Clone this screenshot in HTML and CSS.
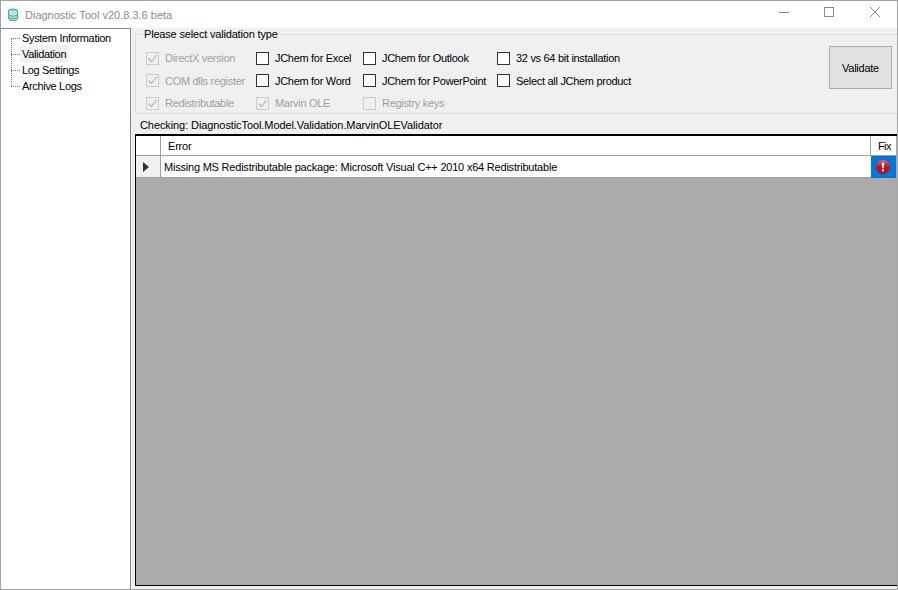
FILE: index.html
```html
<!DOCTYPE html>
<html lang="en">
<head>
<meta charset="utf-8">
<title>Diagnostic Tool</title>
<link rel="stylesheet" href="styles.css">
</head>
<body>
<div class="window">
  <header class="titlebar">
    <svg class="app-icon" width="12" height="14" viewBox="0 0 12 14">
      <ellipse cx="6" cy="3" rx="4.6" ry="2" fill="#8fd0cb" stroke="#3f9f9a"/>
      <path d="M1.4 3v7.500c0 1.200 2 2.200 4.600 2.200s4.600-1 4.600-2.200V3" fill="#bfe5e2" stroke="#3f9f9a"/>
      <path d="M1.400 6c0 1.200 2 2.200 4.600 2.200s4.600-1 4.600-2.200M1.400 8.500c0 1.200 2 2.200 4.600 2.200s4.600-1 4.600-2.200" fill="none" stroke="#3f9f9a"/>
    </svg>
    <span class="title">Diagnostic Tool v20.8.3.6 beta</span>
    <div class="controls">
      <svg class="ctl" width="45" height="27" viewBox="0 0 45 27"><path d="M17 11.500h10" stroke="#8a8a8a"/></svg>
      <svg class="ctl" width="45" height="27" viewBox="0 0 45 27"><rect x="17.500" y="6.500" width="9" height="9" fill="none" stroke="#8a8a8a"/></svg>
      <svg class="ctl" width="45" height="27" viewBox="0 0 45 27"><path d="M18 6l10 10M28 6L18 16" stroke="#8a8a8a" fill="none"/></svg>
    </div>
  </header>
  <div class="body">
    <nav class="tree">
      <ul class="tree-list">
        <li class="tree-item"><span class="tree-label">System Information</span></li>
        <li class="tree-item"><span class="tree-label selected">Validation</span></li>
        <li class="tree-item"><span class="tree-label">Log Settings</span></li>
        <li class="tree-item last"><span class="tree-label">Archive Logs</span></li>
      </ul>
    </nav>
    <main class="content">
      <section class="top">
        <fieldset class="group">
          <legend class="legend">Please select validation type</legend>
          <div class="options">
            <div class="opt off"><span class="box checked"><svg width="11" height="11" viewBox="0 0 11 11"><path d="M1.500 5.500l3 3 5-6.500" fill="none" stroke="#b5b5b5" stroke-width="1.200"/></svg></span><span>DirectX version</span></div>
            <div class="opt"><span class="box"></span><span>JChem for Excel</span></div>
            <div class="opt"><span class="box"></span><span>JChem for Outlook</span></div>
            <div class="opt"><span class="box"></span><span>32 vs 64 bit installation</span></div>
            <div class="opt off"><span class="box checked"><svg width="11" height="11" viewBox="0 0 11 11"><path d="M1.500 5.500l3 3 5-6.500" fill="none" stroke="#b5b5b5" stroke-width="1.200"/></svg></span><span>COM dlls register</span></div>
            <div class="opt"><span class="box"></span><span>JChem for Word</span></div>
            <div class="opt"><span class="box"></span><span>JChem for PowerPoint</span></div>
            <div class="opt"><span class="box"></span><span>Select all JChem product</span></div>
            <div class="opt off"><span class="box checked"><svg width="11" height="11" viewBox="0 0 11 11"><path d="M1.500 5.500l3 3 5-6.500" fill="none" stroke="#b5b5b5" stroke-width="1.200"/></svg></span><span>Redistributable</span></div>
            <div class="opt off"><span class="box checked"><svg width="11" height="11" viewBox="0 0 11 11"><path d="M1.500 5.500l3 3 5-6.500" fill="none" stroke="#b5b5b5" stroke-width="1.200"/></svg></span><span>Marvin OLE</span></div>
            <div class="opt off"><span class="box checked"></span><span>Registry keys</span></div>
          </div>
        </fieldset>
        <button class="validate" type="button">Validate</button>
      </section>
      <div class="status">Checking: DiagnosticTool.Model.Validation.MarvinOLEValidator</div>
      <section class="grid">
        <div class="grid-table">
          <div class="cell head corner"></div>
          <div class="cell head">Error</div>
          <div class="cell head fix">Fix</div>
          <div class="cell rowhead"><svg width="7" height="10" viewBox="0 0 7 10"><path d="M0 0l6 5-6 5z" fill="#333"/></svg></div>
          <div class="cell msg">Missing MS Redistributable package: Microsoft Visual C++ 2010 x64 Redistributable</div>
          <div class="cell fixcell"><svg width="14" height="14" viewBox="0 0 14 14"><defs><linearGradient id="err" x1="0" y1="0" x2="0" y2="1"><stop offset="0" stop-color="#e8606a"/><stop offset="0.5" stop-color="#c8141c"/><stop offset="1" stop-color="#a80f16"/></linearGradient></defs><circle cx="7" cy="7" r="7" fill="url(#err)"/><path d="M5.700 2.800h2.600L7.700 8.200H6.300z" fill="#fff"/><rect x="6" y="9.400" width="2" height="2" fill="#fff"/></svg></div>
        </div>
      </section>
    </main>
  </div>
</div>
</body>
</html>
```
FILE: styles.css
```css
* { box-sizing: border-box; }
html, body { margin: 0; padding: 0; }
body { width: 898px; height: 590px; overflow: hidden; font-family: "Liberation Sans", Arial, sans-serif; font-size: 11px; letter-spacing: -0.21px; color: #000; }
.window { width: 898px; height: 590px; border: 1px solid #a3a3a3; display: flex; flex-direction: column; background: #f0f0f0; }
.titlebar { height: 27px; background: #fff; display: flex; align-items: center; padding-left: 6px; flex: none; }
.app-icon { flex: none; margin-right: 6px; }
.title { color: #8c8c8c; font-size: 11px; letter-spacing: 0; }
.controls { margin-left: auto; display: flex; }
.ctl { display: block; }
.body { flex: 1; display: flex; min-height: 0; }
.tree { width: 130px; flex: none; background: #fff; border-top: 1px solid #828790; border-right: 1px solid #828790; padding-top: 1px; }
.tree-list { list-style: none; margin: 0; padding: 0; }
.tree-item { height: 16px; padding-left: 19px; display: flex; align-items: center; position: relative; letter-spacing: -0.33px; }
.tree-item::before { content: ""; position: absolute; left: 10px; top: 8px; width: 9px; border-top: 1px dotted #777; }
.tree-item::after { content: ""; position: absolute; left: 10px; top: 8px; height: 16px; border-left: 1px dotted #777; }
.tree-item.last::after { display: none; }
.tree-label { padding: 0 2px; line-height: 16px; white-space: nowrap; }
.tree-label.selected { background: #f0f0f0; }
.content { flex: 1; min-width: 0; display: flex; flex-direction: column; padding-left: 4px; }
.top { display: flex; position: relative; height: 87px; flex: none; }
.group { flex: 1; margin: 0; padding: 0 0 0 9px; height: 86px; border: 1px solid #dcdcdc; border-right: 0; border-width: 1px 0 1px 1px; min-width: 0; }
.legend { padding: 0 2px; margin-left: -3px; line-height: 12px; letter-spacing: -0.18px; }
.options { display: grid; grid-template-columns: 110px 107px 134px 200px; grid-auto-rows: 22.500px; margin-top: 7px; margin-left: 1px; letter-spacing: -0.3px; }
.opt { display: flex; align-items: center; gap: 6px; white-space: nowrap; }
.opt.off { color: #a0a0a0; }
.box { width: 13px; height: 13px; border: 1px solid #333; background: #fff; display: flex; align-items: center; justify-content: center; flex: none; }
.box.checked { border-color: #cccccc; background: transparent; }
.validate { position: absolute; right: 5px; top: 18px; width: 63px; height: 43px; background: #e1e1e1; border: 1px solid #adadad; font: inherit; letter-spacing: -0.25px; color: #000; padding: 0; }
.status { height: 19px; line-height: 19px; padding: 1px 0 0 5px; flex: none; white-space: nowrap; letter-spacing: -0.09px; }
.status { line-height: 18px; }
.grid { flex: 1; min-height: 0; background: #ababab; border: 1px solid #000; border-width: 2px 0 1px 1px; margin-bottom: 3px; }
.grid-table { display: grid; grid-template-columns: 25px 1fr 25px; grid-template-rows: 20px 22px; padding-right: 1px; }
.cell { background: #fff; display: flex; align-items: center; white-space: nowrap; border-right: 1px solid #a0a0a0; border-bottom: 1px solid #a0a0a0; padding-left: 3px; }
.head { padding-left: 7px; }
.fix { padding-left: 7px; border-right: 0; letter-spacing: -0.6px; }
.rowhead { background: #f0f0f0; justify-content: flex-start; padding-left: 7px; }
.msg { border-right: 0; }
.fixcell { background: #0078d7; justify-content: center; padding: 0 1px 0 0; border-right: 0; border-bottom: 0; }
```
